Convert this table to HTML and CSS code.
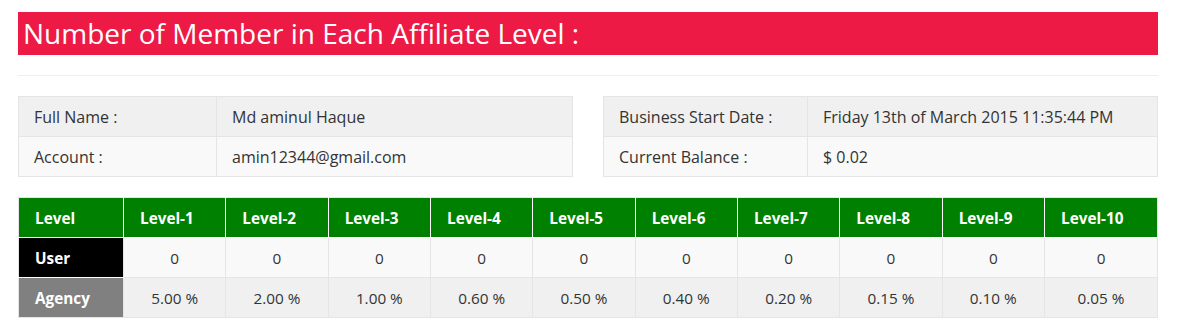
FILE: index.html
```html
<!DOCTYPE html>
<html>
<head>
<meta charset="utf-8">
<link rel="stylesheet" href="styles.css">
</head>
<body>
<div class="page">
  <h2 class="title">Number of Member in Each Affiliate Level :</h2>
  <hr class="divider">
  <div class="info">
    <table class="info-table">
      <colgroup><col class="info-key-left"><col></colgroup>
      <tr class="odd"><td>Full Name :</td><td>Md aminul Haque</td></tr>
      <tr class="even"><td>Account :</td><td>amin12344@gmail.com</td></tr>
    </table>
    <table class="info-table">
      <colgroup><col class="info-key-right"><col></colgroup>
      <tr class="odd"><td>Business Start Date :</td><td>Friday 13th of March 2015 11:35:44 PM</td></tr>
      <tr class="even"><td>Current Balance :</td><td>$ 0.02</td></tr>
    </table>
  </div>
  <table class="levels">
    <colgroup>
      <col class="col-first">
      <col><col><col><col><col><col><col><col><col>
      <col class="col-last">
    </colgroup>
    <tr class="head">
      <th class="lbl lbl-level">Level</th>
      <th>Level-1</th><th>Level-2</th><th>Level-3</th><th>Level-4</th><th>Level-5</th>
      <th>Level-6</th><th>Level-7</th><th>Level-8</th><th>Level-9</th><th>Level-10</th>
    </tr>
    <tr class="user">
      <th class="lbl lbl-user">User</th>
      <td>0</td><td>0</td><td>0</td><td>0</td><td>0</td><td>0</td><td>0</td><td>0</td><td>0</td><td>0</td>
    </tr>
    <tr class="agency">
      <th class="lbl lbl-agency">Agency</th>
      <td>5.00 %</td><td>2.00 %</td><td>1.00 %</td><td>0.60 %</td><td>0.50 %</td>
      <td>0.40 %</td><td>0.20 %</td><td>0.15 %</td><td>0.10 %</td><td>0.05 %</td>
    </tr>
  </table>
</div>
</body>
</html>
```
FILE: styles.css
```css
html, body {
  margin: 0;
  padding: 0;
  background: #ffffff;
}
body {
  font-family: "Open Sans", "Liberation Sans", sans-serif;
  color: #333333;
  font-size: 15px;
}
.page {
  padding: 12px 30px 0 18px;
}
.title {
  margin: 0;
  height: 43px;
  background: #ec1a45;
  color: #ffffff;
  font-weight: 400;
  font-size: 28px;
  line-height: 43px;
  padding: 0 5px;
  white-space: nowrap;
}
.divider {
  margin: 20px 0 20px;
  border: 0;
  border-top: 1px solid #eeeeee;
  height: 0;
}
.info {
  display: flex;
  gap: 30px;
}
.info-table {
  flex: 1;
  border-collapse: collapse;
  table-layout: fixed;
  font-size: 16px;
}
.info-key-left { width: 198px; }
.info-key-right { width: 204px; }
.info-table td {
  border: 1px solid #e5e5e5;
  height: 40px;
  padding: 0 15px;
  line-height: 20px;
  box-sizing: border-box;
  white-space: nowrap;
}
.info-table .odd td { background: #f0f0f0; }
.info-table .even td { background: #f9f9f9; }
.levels {
  margin-top: 20px;
  width: 100%;
  border-collapse: collapse;
  table-layout: fixed;
  font-size: 15.3px;
}
.col-first { width: 105px; }
.col-last { width: 113px; }
.levels th, .levels td {
  height: 40px;
  box-sizing: border-box;
  padding: 0 16px;
  line-height: 20px;
  white-space: nowrap;
}
.levels td {
  border: 1px solid #e5e5e5;
  text-align: center;
}
.levels th {
  text-align: left;
  font-weight: 700;
  color: #ffffff;
}
.levels .head th {
  background: #008000;
  border: 1px solid #ffffff;
  border-top-color: #e5e5e5;
}
.levels .head th:last-child { border-right-color: #e5e5e5; }
.levels .head th:first-child { border-left-color: #e5e5e5; }
.levels .lbl { border: 1px solid #e5e5e5; }
.levels .lbl-level { background: #e74c3c; }
.levels .lbl-user { background: #000000; border-bottom-color: #ffffff; }
.levels .lbl-agency { background: #808080; }
.levels .user td { background: #f9f9f9; }
.levels .agency td { background: #f0f0f0; }
```
